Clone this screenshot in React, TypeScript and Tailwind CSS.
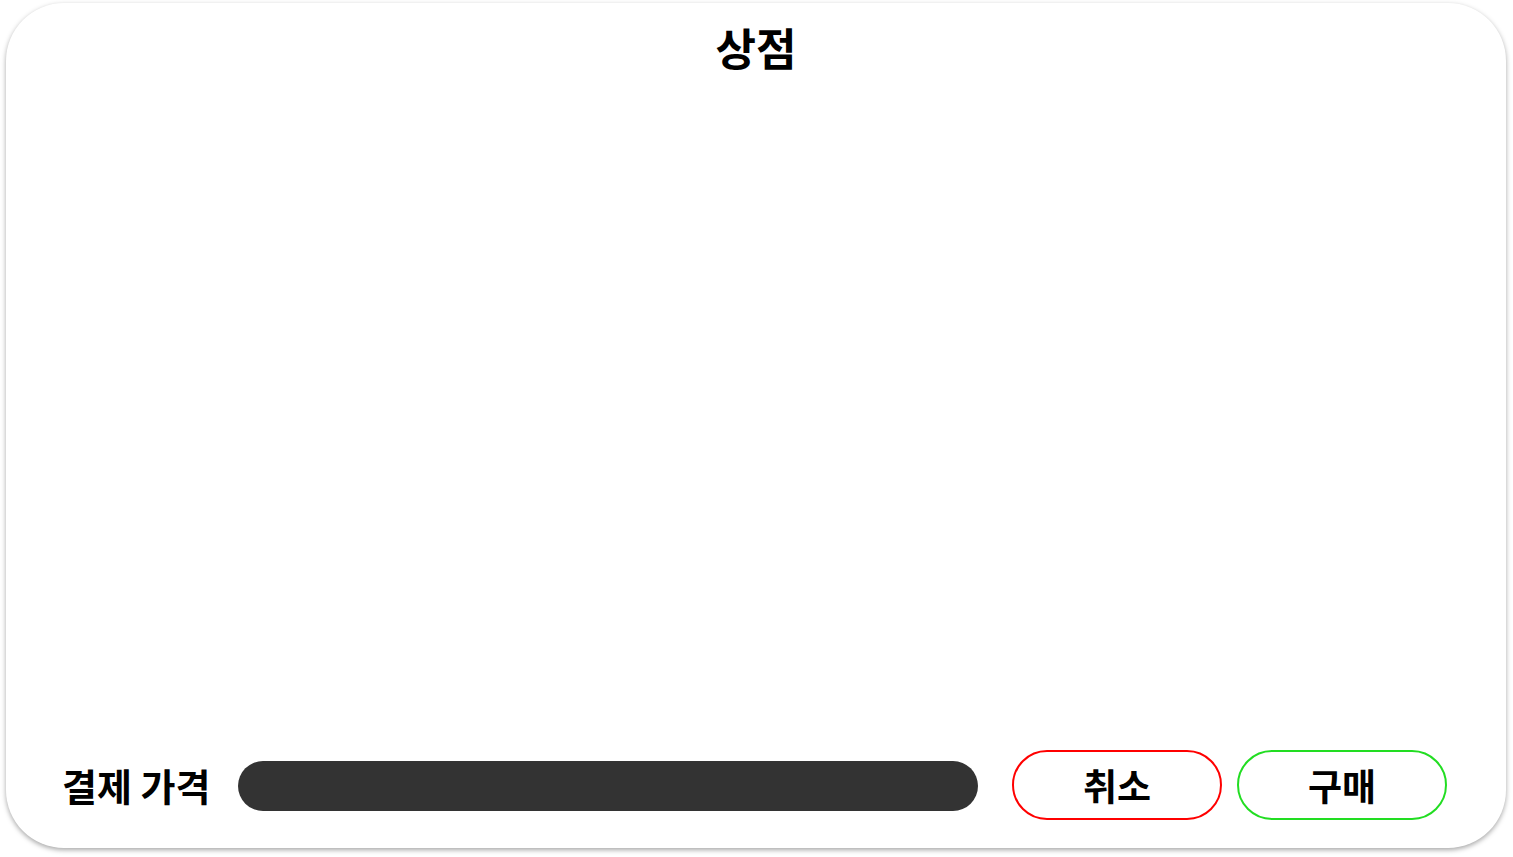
export default function App() {
  return (
    <div className="w-[1513px] h-[857px] bg-white pt-[3px] pl-[6px] font-['Noto_Sans_CJK_KR','Noto_Sans',sans-serif]">
      <div className="w-[1500px] h-[845px] rounded-[58px] bg-white shadow-[0_2px_5px_rgba(0,0,0,0.35)] flex flex-col">
        {/* Title */}
        <h1 className="text-center text-[44px] font-bold leading-none text-black pt-[22px]">상점</h1>

        <div className="flex-1" />

        {/* Payment row */}
        <div className="flex items-center pl-[56px] pr-[59px] pb-[28px]">
          <span className="text-[38px] font-bold leading-none text-black whitespace-nowrap">결제 가격</span>
          <div className="ml-[28px] mt-[2px] h-[50px] w-[740px] rounded-full bg-[#333333]" />
          <button className="ml-[34px] h-[70px] w-[210px] rounded-full border-2 border-[#ff0000] bg-white text-[37px] font-bold leading-none text-black">
            취소
          </button>
          <button className="ml-[15px] h-[70px] w-[210px] rounded-full border-2 border-[#22dd22] bg-white text-[37px] font-bold leading-none text-black">
            구매
          </button>
        </div>
      </div>
    </div>
  );
}
